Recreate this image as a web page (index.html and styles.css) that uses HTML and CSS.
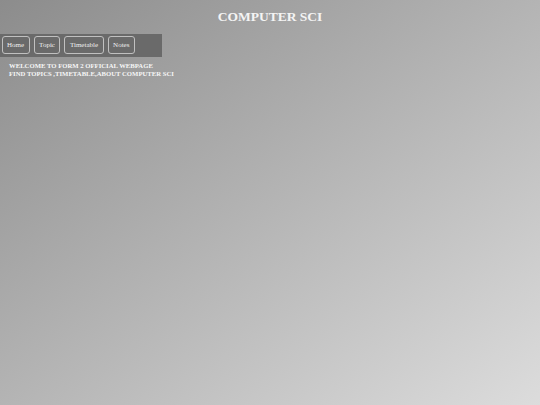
FILE: index.html
```html
<!DOCTYPE html>
<html>
<head>
<meta charset="utf-8">
<link rel="stylesheet" href="styles.css">
</head>
<body>
<h1 class="title">COMPUTER SCI</h1>
<nav class="nav">
  <a class="btn" href="#">Home</a>
  <a class="btn" href="#">Topic</a>
  <a class="btn" href="#">Timetable</a>
  <a class="btn" href="#">Notes</a>
</nav>
<div class="intro">
  <p>WELCOME TO FORM 2 OFFICIAL WEBPAGE</p>
  <p>FIND TOPICS ,TIMETABLE,ABOUT COMPUTER SCI</p>
</div>
</body>
</html>
```
FILE: styles.css
```css
html, body {
  margin: 0;
  padding: 0;
}
body {
  width: 540px;
  height: 405px;
  background: linear-gradient(to bottom right, #8c8c8c, #dcdcdc);
  font-family: "Liberation Serif", serif;
  color: #f2f2f2;
}
.title {
  margin: 0;
  padding-top: 9px;
  font-size: 13.5px;
  line-height: 16px;
  text-align: center;
  color: #f4f4f4;
}
.nav {
  box-sizing: border-box;
  margin-top: 9px;
  width: 162px;
  height: 23px;
  padding: 2px 0 0 1.5px;
  display: flex;
  align-items: flex-start;
  gap: 4px;
  background: #6a6a6a;
}
.btn {
  display: block;
  box-sizing: border-box;
  padding: 0 4.5px;
  height: 18px;
  line-height: 16px;
  border: 1px solid #c0c0c0;
  border-radius: 3px;
  color: #f0f0f0;
  text-decoration: none;
  font-size: 7px;
}
.intro {
  padding: 5px 0 0 9px;
  font-weight: bold;
  font-size: 6.7px;
  line-height: 8px;
  color: #f6f6f6;
}
.intro p {
  margin: 0;
}
```
